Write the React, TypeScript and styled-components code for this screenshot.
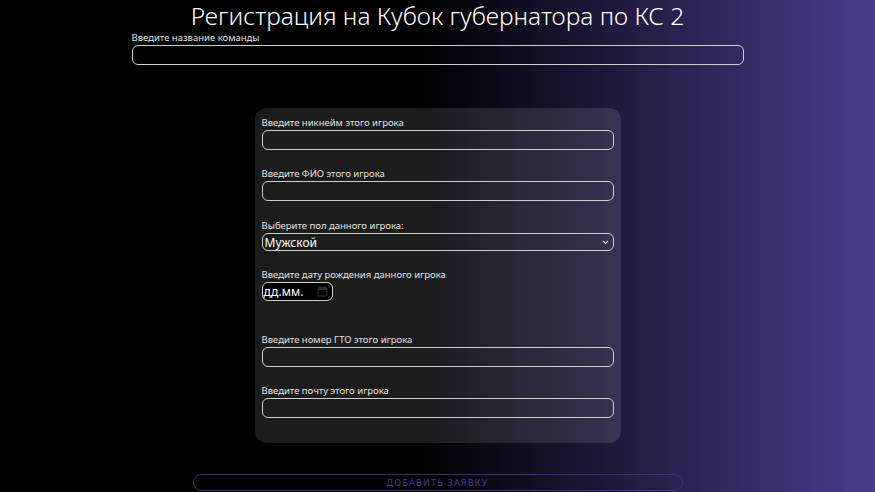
import * as React from "react";
import styled, { createGlobalStyle } from "styled-components";

const GlobalStyle = createGlobalStyle`
  html, body {
    margin: 0;
    padding: 0;
  }
  body {
    min-height: 100vh;
    background: linear-gradient(90deg, #000 48%, #4a3c8d 100%);
    font-family: "Noto Sans", "Open Sans", sans-serif;
    color: #fff;
    overflow: hidden;
  }
`;

const Page = styled.div`
  display: flex;
  flex-direction: column;
  align-items: center;
  height: 492px;
`;

const Title = styled.h1`
  margin: 0;
  font-size: 24.5px;
  font-weight: 300;
  line-height: 31px;
  color: #fff;
`;

const TeamBlock = styled.div`
  width: 612px;
  display: flex;
  flex-direction: column;
`;

const Label = styled.label`
  font-size: 9.5px;
  line-height: 13px;
  color: #e2e2e2;
  margin-bottom: 1px;
`;

const TextInput = styled.input`
  box-sizing: border-box;
  height: 20px;
  width: 100%;
  margin: 0;
  padding: 0 4px;
  background: transparent;
  border: 1.5px solid #cfcfcf;
  border-radius: 6px;
  color: #fff;
  font-family: inherit;
  outline: none;
`;

const Panel = styled.div`
  box-sizing: border-box;
  width: 366px;
  margin-top: 43px;
  padding: 8px 7px 25px;
  border-radius: 12px;
  background: rgba(255, 255, 255, 0.11);
  display: flex;
  flex-direction: column;
`;

const Field = styled.div<{ $extra?: number }>`
  display: flex;
  flex-direction: column;
  align-items: flex-start;
  margin-top: ${(p) => 17 + (p.$extra || 0)}px;
  &:first-child {
    margin-top: 0;
  }
`;

const SelectBox = styled.div`
  box-sizing: border-box;
  width: 100%;
  height: 18px;
  border: 1.5px solid #cfcfcf;
  border-radius: 6px;
  display: flex;
  align-items: center;
  justify-content: space-between;
  padding: 0 4px 0 2px;
  font-size: 12px;
  color: #fff;
`;

const DateBox = styled.div`
  box-sizing: border-box;
  width: 71px;
  height: 19px;
  border: 1.5px solid #cfcfcf;
  border-radius: 6px;
  background: #000;
  display: flex;
  align-items: center;
  justify-content: space-between;
  padding: 0 4px 0 1px;
  font-size: 12px;
  color: #fff;
`;

const SubmitButton = styled.button`
  box-sizing: border-box;
  width: 490px;
  height: 17px;
  margin-top: 31px;
  padding: 0;
  background: transparent;
  border: 1px solid #3b3178;
  border-radius: 9px;
  color: #4a3c94;
  font-family: inherit;
  font-size: 9px;
  letter-spacing: 1.2px;
  line-height: 15px;
`;

const Chevron = () => (
  <svg width="7" height="5" viewBox="0 0 7 5">
    <path d="M1 1 L3.5 3.5 L6 1" stroke="#ddd" strokeWidth="1.1" fill="none" />
  </svg>
);

const CalendarIcon = () => (
  <svg width="11" height="11" viewBox="0 0 11 11">
    <rect x="1" y="1.5" width="9" height="8.5" rx="1.5" fill="none" stroke="#2c2c2c" strokeWidth="1.2" />
    <rect x="1" y="1.5" width="9" height="2.5" fill="#2c2c2c" />
  </svg>
);

export default function App() {
  return (
    <>
      <GlobalStyle />
      <Page>
        <Title>Регистрация на Кубок губернатора по КС 2</Title>
        <TeamBlock>
          <Label>Введите название команды</Label>
          <TextInput />
        </TeamBlock>
        <Panel>
          <Field>
            <Label>Введите никнейм этого игрока</Label>
            <TextInput />
          </Field>
          <Field>
            <Label>Введите ФИО этого игрока</Label>
            <TextInput />
          </Field>
          <Field $extra={1}>
            <Label>Выберите пол данного игрока:</Label>
            <SelectBox>
              <span>Мужской</span>
              <Chevron />
            </SelectBox>
          </Field>
          <Field>
            <Label>Введите дату рождения данного игрока</Label>
            <DateBox>
              <span>дд.мм.</span>
              <CalendarIcon />
            </DateBox>
          </Field>
          <Field $extra={15}>
            <Label>Введите номер ГТО этого игрока</Label>
            <TextInput />
          </Field>
          <Field>
            <Label>Введите почту этого игрока</Label>
            <TextInput />
          </Field>
        </Panel>
        <SubmitButton>ДОБАВИТЬ ЗАЯВКУ</SubmitButton>
      </Page>
    </>
  );
}
